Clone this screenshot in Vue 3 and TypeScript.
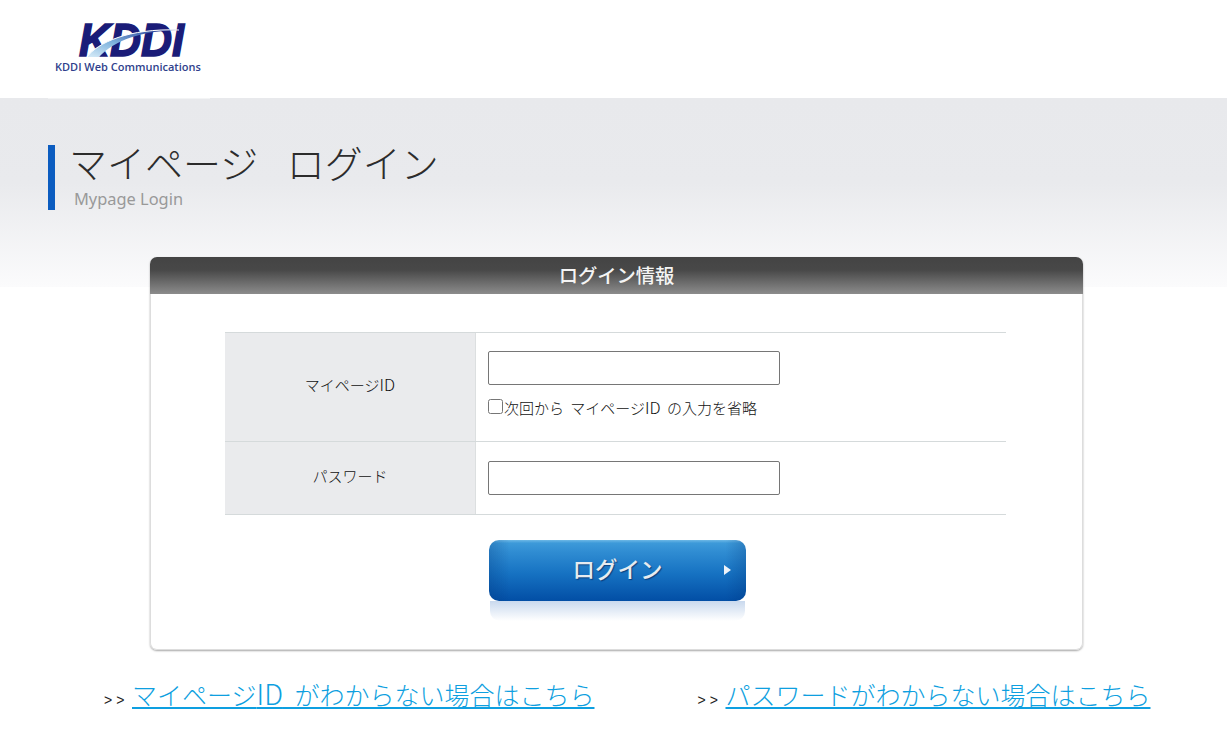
<script setup lang="ts">
const pw = 'パスワード'
</script>

<template>
  <div class="page">
    <header class="top">
      <div class="logo">
        <svg class="mark" width="116" height="44" viewBox="0 -8 116 44">
          <defs>
            <linearGradient id="sw" x1="0" y1="1" x2="1" y2="0">
              <stop offset="0" stop-color="#d8ecf8" />
              <stop offset="0.4" stop-color="#7fb4de" />
              <stop offset="1" stop-color="#1b2c8c" />
            </linearGradient>
          </defs>
          <text class="mark-text" x="2" y="34" textLength="105" lengthAdjust="spacingAndGlyphs">KDDI</text>
          <path d="M10 35 C20 21 52 6 102 8 C64 9 38 18 22 35 Z" fill="url(#sw)" />
          <path d="M10 35 C20 21 52 6 102 8" fill="none" stroke="#fff" stroke-width="1" />
        </svg>
        <span class="logo-name">KDDI Web Communications</span>
      </div>
    </header>

    <section class="band">
      <div class="strip"></div>
      <div class="title-box">
        <h1 class="title">マイページ ログイン</h1>
        <p class="subtitle">Mypage Login</p>
      </div>
    </section>

    <section class="card">
      <h2 class="card-head">ログイン情報</h2>
      <div class="card-body">
        <div class="form-table">
          <div class="row row-id">
            <div class="label"><span>マイページ<span class="latin">ID</span></span></div>
            <div class="field">
              <input class="input" type="text" />
              <label class="remember"><input class="check" type="checkbox" /><span>次回から マイページ<span class="latin">ID</span> の入力を省略</span></label>
            </div>
          </div>
          <div class="row row-pw">
            <div class="label">{{ pw }}</div>
            <div class="field field-pw">
              <input class="input" type="password" />
            </div>
          </div>
        </div>
        <div class="btn-wrap">
          <button class="login" type="button">
            <span class="login-text">ログイン</span>
            <svg class="arrow" width="7" height="10" viewBox="0 0 7 10"><path d="M0 0 L7 5 L0 10 Z" fill="#eef3f9" /></svg>
          </button>
          <div class="reflect"></div>
        </div>
      </div>
    </section>

    <nav class="links">
      <span class="link-item link-a"><span class="chev">&gt;&gt;</span><a href="#">マイページ<span class="latin-lg">ID</span> がわからない場合はこちら</a></span>
      <span class="link-item link-b"><span class="chev">&gt;&gt;</span><a href="#">パスワードがわからない場合はこちら</a></span>
    </nav>
  </div>
</template>

<style scoped>
.page {
  width: 1227px;
  height: 755px;
  overflow: hidden;
  background: #fff;
  font-family: "Noto Sans CJK JP", "Noto Sans", sans-serif;
  color: #333;
}
.top { height: 98px; padding-left: 55px; box-sizing: border-box; }
.logo { display: flex; flex-direction: column; padding-top: 14px; }
.mark { margin-left: 22px; display: block; }
.mark-text {
  font: italic 700 46px "Liberation Sans", sans-serif;
  fill: #1a1c78;
  stroke: #1a1c78;
  stroke-width: 1.6px;
}
.logo-name {
  font: 600 11px/12px "Open Sans", "Noto Sans", sans-serif;
  color: #2f3f8c;
  margin-top: 3px;
  white-space: nowrap;
}
.band {
  position: relative;
  height: 189px;
  background: linear-gradient(#e8e9ec 0, #e9eaed 45%, #fbfbfc 100%);
  padding: 47px 0 0 48px;
  box-sizing: border-box;
}
.strip { position: absolute; left: 48px; top: 0; width: 162px; height: 1px; background: #f3f4f5; }
.title-box {
  margin-top: 0;
  padding-left: 24px;
  box-sizing: border-box;
  height: 70px;
  background: linear-gradient(#0b5cc0, #0b5cc0) 0 5px / 7px 65px no-repeat;
}
.title {
  margin: -5px 0 0 -3px;
  font-size: 38px;
  line-height: 44px;
  font-weight: 300;
  color: #2c2c2c;
  word-spacing: 20px;
  white-space: nowrap;
}
.subtitle { margin: 4px 0 0 2px; font: 16.4px/22px "Noto Sans", sans-serif; color: #999; }
.card {
  position: relative;
  margin: -30px 0 0 150px;
  width: 933px;
  height: 393px;
  background: #fff;
  border-radius: 7px;
  box-shadow: 0 1px 2px rgba(0, 0, 0, 0.35);
}
.card-head {
  margin: 0;
  height: 37px;
  border-radius: 7px 7px 0 0;
  background: linear-gradient(#444 0, #484848 35%, #8c8c8c 100%);
  color: #f4f4f4;
  font-size: 19.3px;
  line-height: 37px;
  font-weight: 500;
  text-align: center;
}
.card-body {
  padding: 38px 76px 0 74px;
  border: 1px solid #ddd;
  border-top: 0;
  height: 356px;
  box-sizing: border-box;
  border-radius: 0 0 7px 7px;
}
.form-table { border-top: 1px solid #d5dadb; }
.row { display: flex; border-bottom: 1px solid #d5dadb; box-sizing: border-box; }
.row-id { height: 109px; }
.row-pw { height: 73px; }
.label {
  width: 251px;
  background: #eaebed;
  border-right: 1px solid #dcdfe0;
  box-sizing: border-box;
  display: flex;
  align-items: center;
  justify-content: center;
  padding-bottom: 6px;
  font-size: 15px;
  font-weight: 300;
  color: #111;
}
.latin { font-size: 16.5px; }
.field { padding: 18px 0 0 12px; display: flex; flex-direction: column; align-items: flex-start; }
.field-pw { padding-top: 19px; }
.input {
  width: 292px;
  height: 34px;
  box-sizing: border-box;
  border: 1px solid #767676;
  border-radius: 2px;
  background: #fff;
  margin: 0;
  padding: 0;
}
.remember {
  display: flex;
  align-items: center;
  font-size: 15px;
  font-weight: 300;
  color: #111;
  margin-top: 12px;
  line-height: 20px;
  word-spacing: 3px;
  white-space: nowrap;
}
.check { width: 15px; height: 15px; margin: 0 1px 3px 0; }
.btn-wrap { margin: 25px 0 0 264px; width: 257px; }
.login {
  display: block;
  position: relative;
  width: 257px;
  height: 61px;
  border: 0;
  padding: 0;
  border-radius: 10px;
  background:
    linear-gradient(90deg, rgba(0, 50, 120, 0.25), rgba(0, 50, 120, 0) 8%, rgba(0, 50, 120, 0) 92%, rgba(0, 50, 120, 0.25)),
    linear-gradient(#6db8e6 0, #3d9ad9 5%, #2f8cd2 20%, #1672c2 55%, #024ea5 100%);
}
.login-text {
  display: block;
  width: 257px;
  box-sizing: border-box;
  text-align: center;
  font-family: "Noto Sans CJK JP", sans-serif;
  font-size: 22.5px;
  font-weight: 500;
  line-height: 56px;
  height: 61px;
  color: #e6ebf0;
  text-shadow: 1px 1px 1px rgba(0, 30, 80, 0.6);
}
.arrow { position: absolute; right: 15px; top: 25px; }
.reflect {
  height: 20px;
  margin: 0 1px;
  border-radius: 0 0 10px 10px;
  background: linear-gradient(#c9d9ee, #fff);
}
.links {
  display: flex;
  padding-top: 27px;
  white-space: nowrap;
  align-items: baseline;
}
.link-a { margin-left: 104px; }
.link-b { margin-left: 103px; }
.chev {
  display: inline-block;
  width: 28px;
  font: 14px "Liberation Sans", sans-serif;
  color: #222;
  letter-spacing: 4px;
}
.link-item a {
  font-size: 25px;
  font-weight: 300;
  line-height: 34px;
  color: #0e9fe0;
  text-decoration: underline;
  word-spacing: 6px;
}
.latin-lg { font-size: 28px; line-height: 1; }
</style>
